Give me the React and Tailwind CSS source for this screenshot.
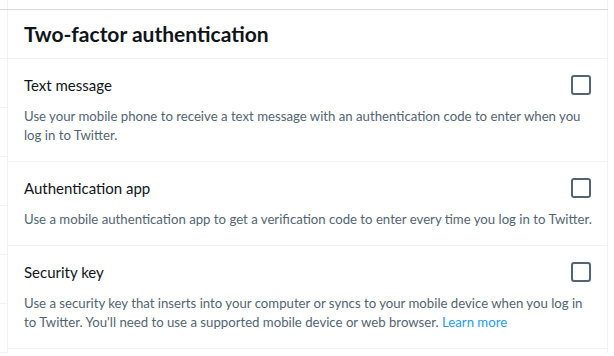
import React from "react";

const font = { fontFamily: '"Segoe UI", Lato, sans-serif' };

function Checkbox() {
  return <div className="w-5 h-5 shrink-0 rounded-[3px] border-2 border-[#536471]" />;
}

function Row({ title, children }) {
  return (
    <div className="border-b border-[#eff3f4] px-4 pt-4 pb-4">
      <div className="flex items-center justify-between h-5">
        <span className="text-[15px] leading-5 text-[#0f1419]">{title}</span>
        <Checkbox />
      </div>
      <p className="mt-3 text-[13.2px] leading-[19px] text-[#536471] whitespace-nowrap">{children}</p>
    </div>
  );
}

export default function App() {
  return (
    <div className="w-[614px] h-[356px] bg-white overflow-hidden" style={font}>
      <div className="h-[9px] border-r border-[#eff3f4] w-[608px] flex">
        <div className="w-[8px] border-r border-[#eff3f4]" />
      </div>
      <div className="flex border-t border-[#cfd9de] w-[608px]">
        <div className="w-[8px] shrink-0 flex flex-col border-r border-[#eff3f4]">
          {[0, 1, 2, 3, 4, 5, 6].map((i) => (
            <div key={i} className="h-[49px] shrink-0 border-b border-[#eff3f4]" />
          ))}
        </div>
        <div className="flex-1 min-w-0 border-r border-[#eff3f4]">
          <div className="h-[49px] border-b border-[#eff3f4] px-4 flex items-center">
            <h2 className="text-[21px] font-bold text-[#0f1419] leading-6">Two-factor authentication</h2>
          </div>
          <Row title="Text message">
            Use your mobile phone to receive a text message with an authentication code to enter when you
            <br />
            log in to Twitter.
          </Row>
          <Row title="Authentication app">
            Use a mobile authentication app to get a verification code to enter every time you log in to Twitter.
          </Row>
          <Row title="Security key">
            Use a security key that inserts into your computer or syncs to your mobile device when you log in
            <br />
            to Twitter. You'll need to use a supported mobile device or web browser.{" "}
            <span className="text-[#1d9bf0]">Learn more</span>
          </Row>
        </div>
      </div>
    </div>
  );
}
